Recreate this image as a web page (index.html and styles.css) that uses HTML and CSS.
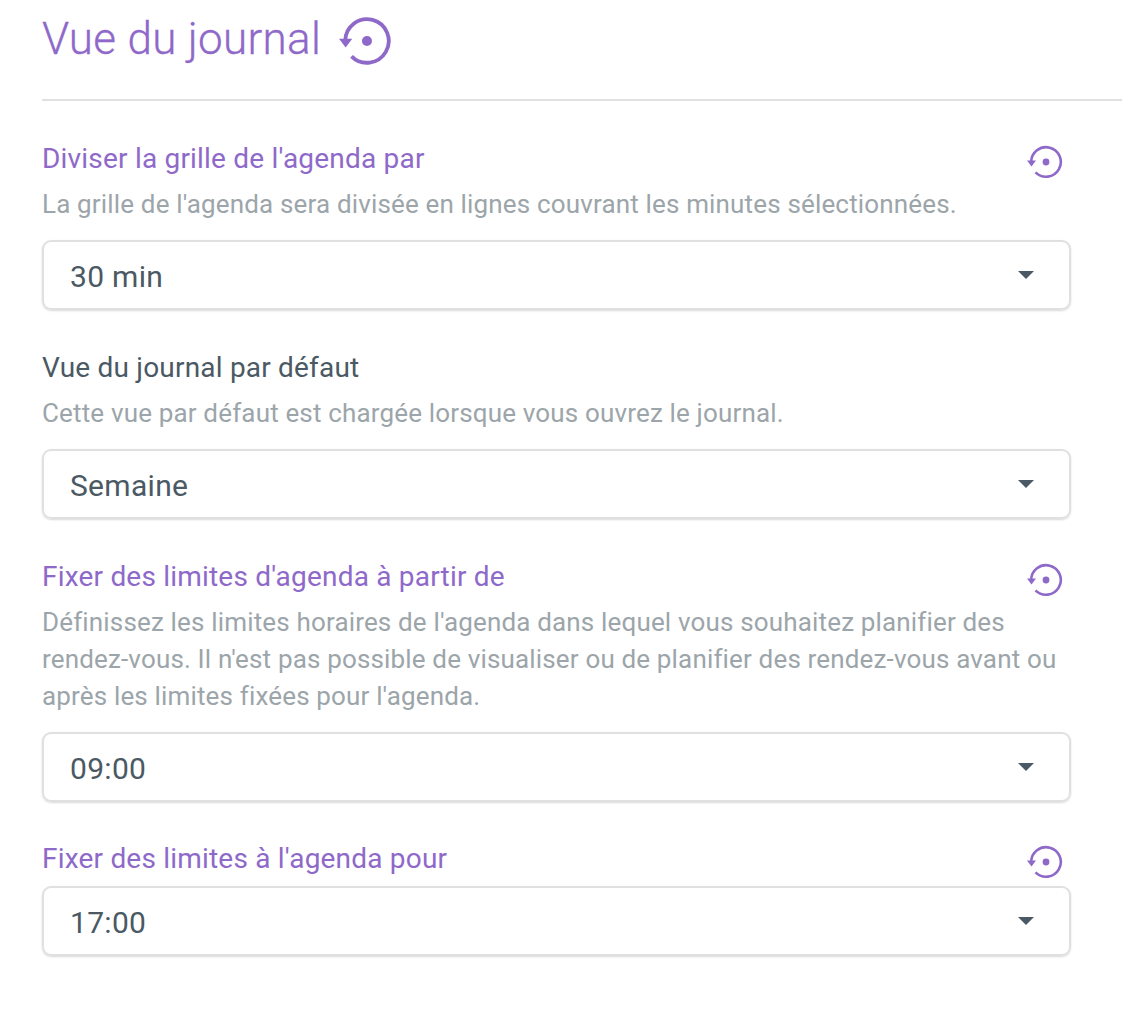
FILE: index.html
```html
<!DOCTYPE html>
<html lang="fr">
<head>
    <meta charset="UTF-8">
    <title>Vue du journal</title>
    <link rel="stylesheet" href="styles.css">
</head>
<body>
    <svg class="sprite" width="0" height="0">
        <symbol id="reset" viewBox="0 0 36 34">
            <path class="reset-arc" d="M4.2 17A14.8 14.8 0 1 1 8.5 27.4"/>
            <path class="reset-fill" d="M0 15.5H9L4.5 21.5Z"/>
            <circle class="reset-fill" cx="19" cy="17" r="3.4"/>
        </symbol>
    </svg>

    <main class="settings">
        <header class="settings-header">
            <h1>Vue du journal</h1>
            <svg class="icon-reset icon-large"><use href="#reset"/></svg>
        </header>

        <section class="field">
            <div class="field-label changed">
                <span>Diviser la grille de l'agenda par</span>
                <svg class="icon-reset"><use href="#reset"/></svg>
            </div>
            <p class="field-help">La grille de l'agenda sera divisée en lignes couvrant les minutes sélectionnées.</p>
            <div class="select">30 min</div>
        </section>

        <section class="field">
            <div class="field-label">
                <span>Vue du journal par défaut</span>
            </div>
            <p class="field-help">Cette vue par défaut est chargée lorsque vous ouvrez le journal.</p>
            <div class="select">Semaine</div>
        </section>

        <section class="field">
            <div class="field-label changed">
                <span>Fixer des limites d'agenda à partir de</span>
                <svg class="icon-reset"><use href="#reset"/></svg>
            </div>
            <p class="field-help">Définissez les limites horaires de l'agenda dans lequel vous souhaitez planifier des rendez-vous. Il n'est pas possible de visualiser ou de planifier des rendez-vous avant ou après les limites fixées pour l'agenda.</p>
            <div class="select">09:00</div>
        </section>

        <section class="field field-compact">
            <div class="field-label changed">
                <span>Fixer des limites à l'agenda pour</span>
                <svg class="icon-reset"><use href="#reset"/></svg>
            </div>
            <div class="select">17:00</div>
        </section>
    </main>
</body>
</html>
```
FILE: styles.css
```css
:root {
    --purple: #8e69c9;
    --slate: #4a5963;
    --muted: #9ca5aa;
    --line: #e0e0e0;
}

* {
    margin: 0;
    padding: 0;
    box-sizing: border-box;
}

body {
    background: #ffffff;
    color: var(--slate);
    font-family: 'Roboto', sans-serif;
    overflow: hidden;
}

.sprite {
    position: absolute;
}

.settings {
    padding-left: 42px;
}

/* Header */
.settings-header {
    display: flex;
    align-items: center;
    gap: 18px;
    height: 101px;
    padding-bottom: 21px;
    border-bottom: 2px solid var(--line);
    margin-bottom: 40px;
}

.settings-header h1 {
    font-size: 44px;
    font-weight: 300;
    line-height: 60px;
    letter-spacing: 0.3px;
    -webkit-text-stroke: 0.3px var(--purple);
    color: var(--purple);
}

/* Fields */
.field {
    width: 1029px;
    margin-bottom: 40px;
}

.field-compact {
    margin-top: -1px;
}

.field-label {
    display: flex;
    justify-content: space-between;
    align-items: center;
    height: 35px;
    font-size: 28px;
    line-height: 36px;
    letter-spacing: 0.2px;
}

.field-label.changed {
    color: var(--purple);
}

.field-help {
    margin-top: 10px;
    font-size: 26px;
    line-height: 37px;
    letter-spacing: 0.16px;
    color: var(--muted);
}

.select {
    position: relative;
    height: 70px;
    margin-top: 17px;
    padding-left: 26px;
    border: 2px solid var(--line);
    border-radius: 9px;
    box-shadow: 0 1px 2px rgba(0, 0, 0, 0.15);
    font-size: 30px;
    line-height: 69px;
    letter-spacing: 0.3px;
}

.field-label + .select {
    margin-top: 10px;
}

.select::after {
    content: '';
    position: absolute;
    top: 29px;
    right: 35px;
    border-left: 8px solid transparent;
    border-right: 8px solid transparent;
    border-top: 8px solid var(--slate);
}

/* Reset icon */
.icon-reset {
    width: 36px;
    height: 34px;
    margin-top: 6px;
    margin-right: 8px;
    flex-shrink: 0;
}

.icon-large {
    width: 53px;
    height: 50px;
    margin-top: 4px;
    margin-right: 0;
}

.reset-arc {
    fill: none;
    stroke: var(--purple);
    stroke-width: 2.6;
}

.reset-fill {
    fill: var(--purple);
}
```
